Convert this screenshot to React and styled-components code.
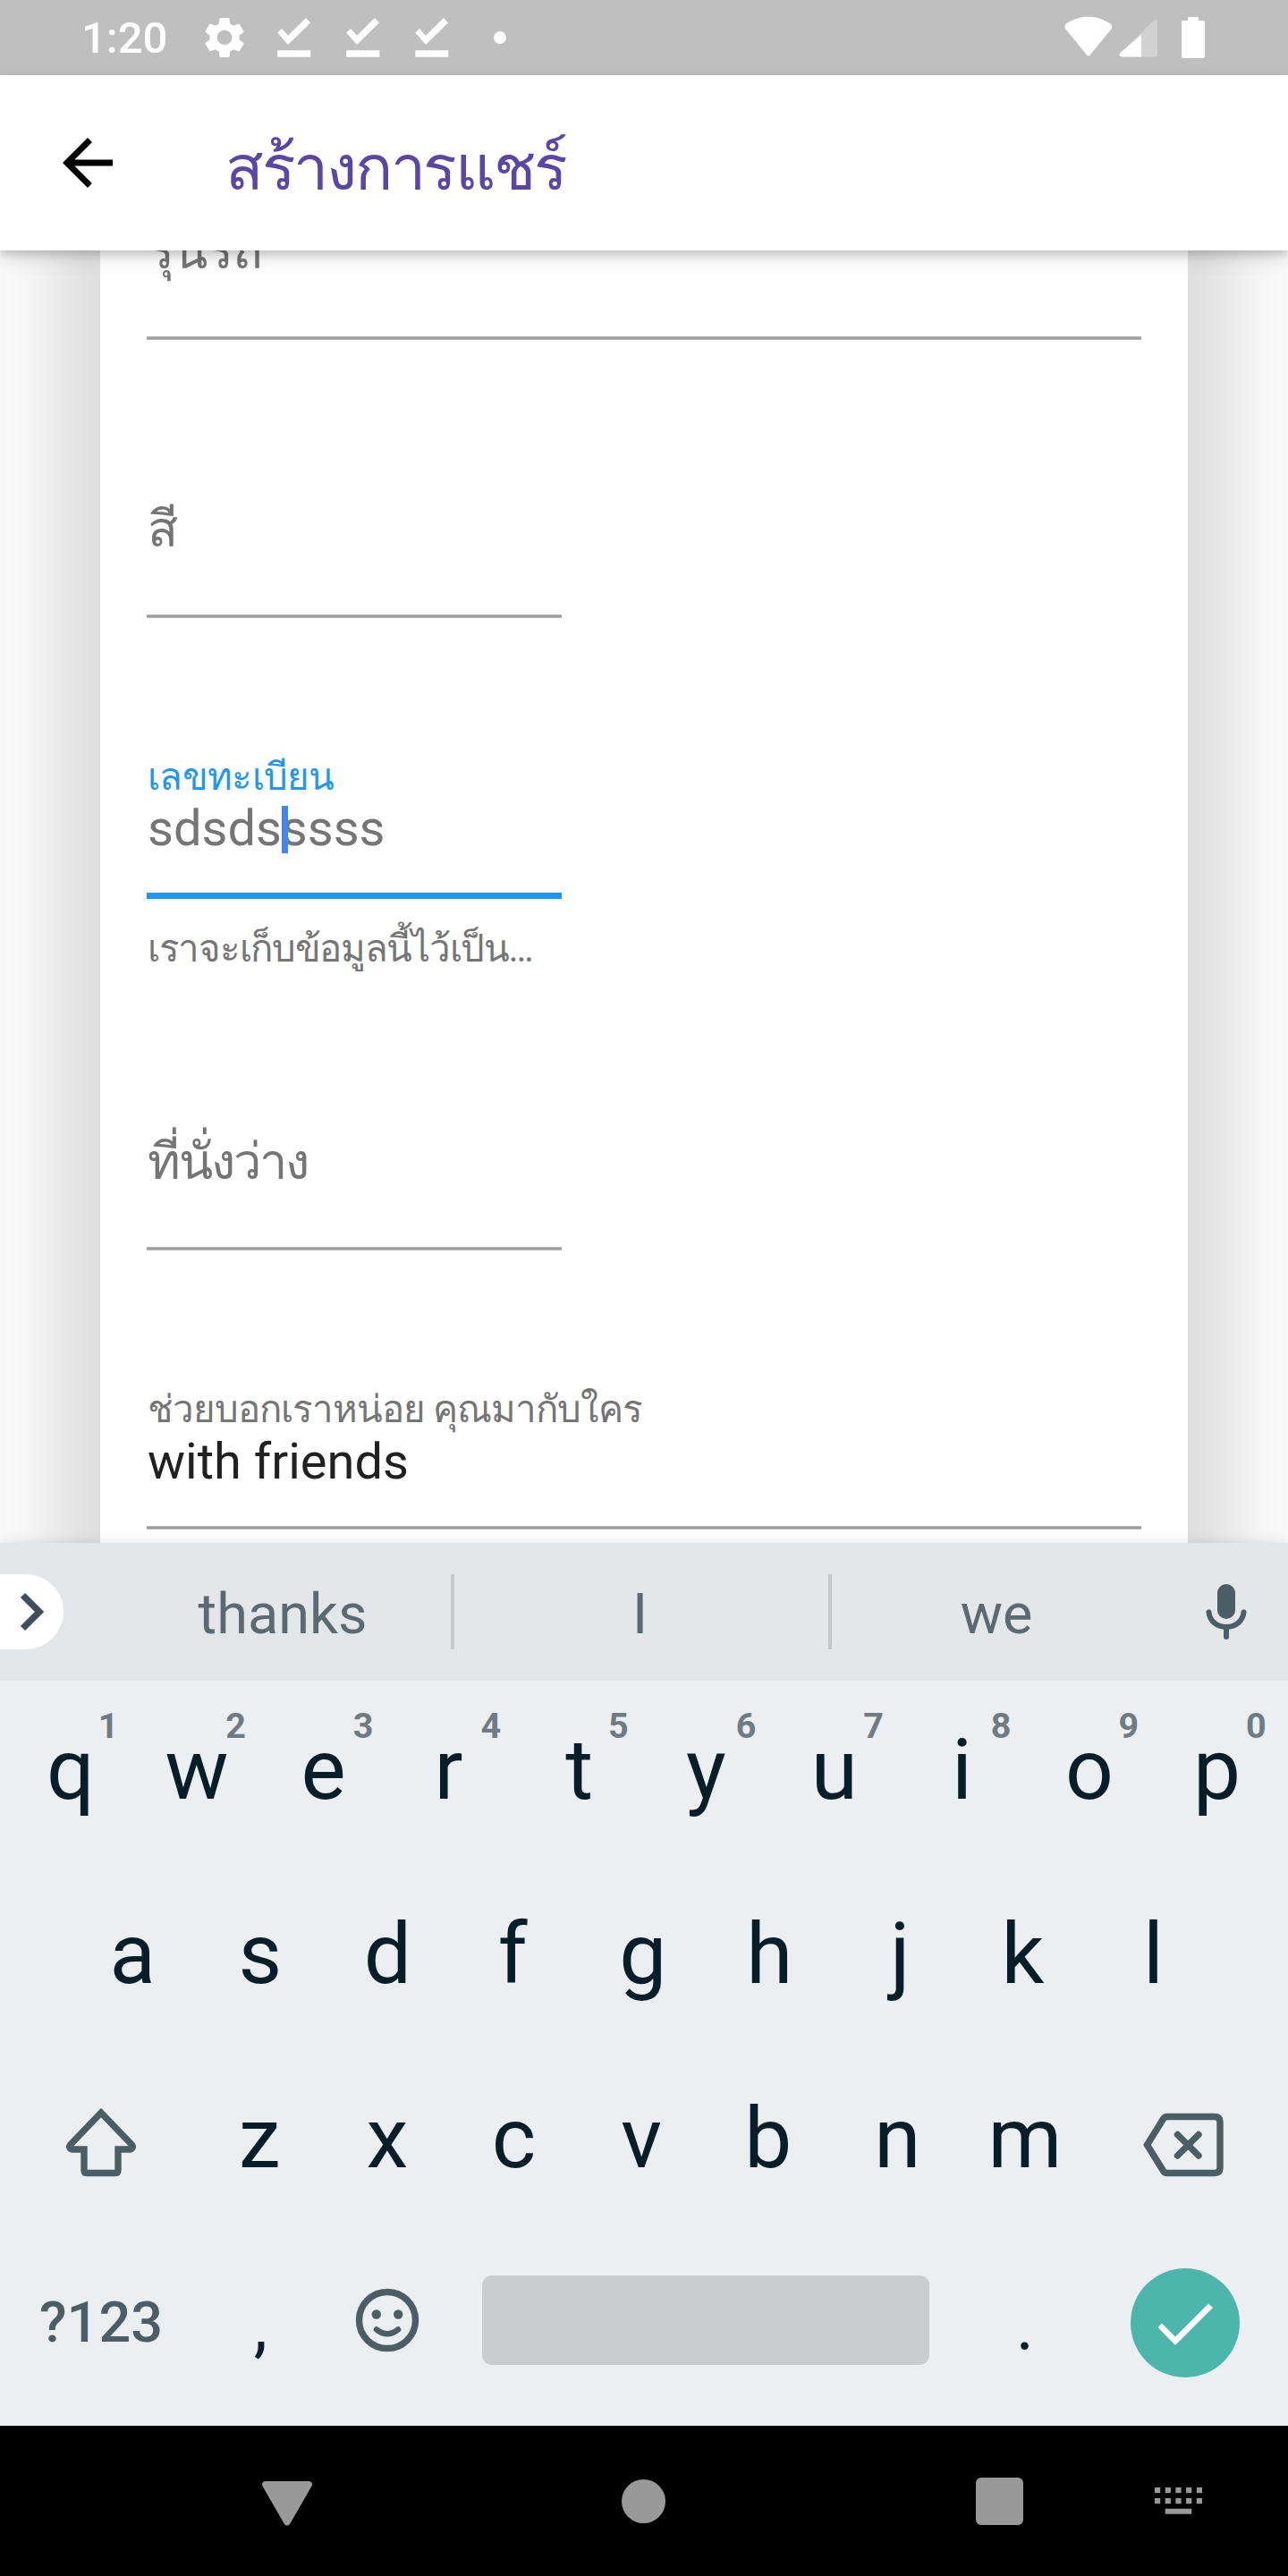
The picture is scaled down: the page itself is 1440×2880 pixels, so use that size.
import React from "react";
import styled, { createGlobalStyle } from "styled-components";

const Global = createGlobalStyle`
  * { box-sizing: border-box; }
  html, body { margin: 0; padding: 0; }
  body { font-family: Roboto, "Noto Sans", sans-serif; background: #fafafa; }
`;

const Screen = styled.div`
  width: 1440px;
  height: 2880px;
  display: flex;
  flex-direction: column;
  overflow: hidden;
`;

const StatusBar = styled.header`
  height: 84px;
  background: #bfbfbf;
  color: #fff;
  display: flex;
  justify-content: space-between;
  padding: 0 84px 0 91px;
`;

const StatusGroup = styled.div`
  display: flex;
  align-items: center;
`;

const Clock = styled.span`
  width: 137px;
  font-size: 49px;
  font-weight: 500;
  line-height: 84px;
  padding-top: 2px;
  white-space: nowrap;
`;

const Icon = styled.svg`
  display: block;
  flex: none;
  width: ${(p) => p.$w}px;
  height: ${(p) => p.$h}px;
  margin-left: ${(p) => p.$ml || 0}px;
  margin-top: ${(p) => p.$mt || 0}px;
  overflow: visible;
`;

const AppBar = styled.div`
  height: 196px;
  flex: none;
  background: #fff;
  display: flex;
  align-items: center;
  padding-left: 56px;
  z-index: 2;
  box-shadow: 0 4px 8px rgba(0, 0, 0, 0.14), 0 8px 20px rgba(0, 0, 0, 0.14);
`;

const Title = styled.h1`
  margin: 0 0 0 112px;
  font-size: 70px;
  font-weight: 400;
  letter-spacing: -2.3px;
  line-height: 84px;
  padding-top: 12px;
  color: #5a46a5;
  white-space: nowrap;
`;

const Body = styled.main`
  height: 1445px;
  flex: none;
  background: #fafafa;
  overflow: hidden;
  padding: 0 112px;
`;

const Card = styled.section`
  height: 1600px;
  background: #fff;
  padding: 0 52px;
  box-shadow: 0 0 64px 50px rgba(0, 0, 0, 0.115);
`;

const Field = styled.div`
  display: flex;
  flex-direction: column;
  justify-content: flex-end;
  height: ${(p) => p.$h}px;
  width: ${(p) => (p.$half ? 464 : 1112)}px;
`;

const Line = styled.div`
  flex: none;
  height: ${(p) => (p.$focus ? 7 : 4)}px;
  margin-top: ${(p) => p.$gap}px;
  background: ${(p) => (p.$focus ? "#2196f3" : "linear-gradient(#b4b4b4 1px, #9e9e9e 1px 3px, #b4b4b4 3px)")};
`;

const Caption = styled.div`
  flex: none;
  font-size: 42px;
  line-height: 50px;
  padding-left: 1px;
  margin-bottom: ${(p) => (p.$focus ? -1 : 0)}px;
  letter-spacing: ${(p) => p.$ls || -0.7}px;
  white-space: nowrap;
  color: ${(p) => (p.$focus ? "#2196f3" : "#757575")};
`;

const Value = styled.div`
  flex: none;
  position: relative;
  padding-left: 1px;
  font-size: 56px;
  line-height: 66px;
  letter-spacing: ${(p) => p.$ls || 0}px;
  white-space: nowrap;
  color: ${(p) => (p.$filled ? "#212121" : "#757575")};
`;

const Caret = styled.i`
  position: absolute;
  left: 151px;
  top: 8px;
  width: 7px;
  height: 53px;
  background: #4285f4;
`;

const Helper = styled(Caption)`
  margin-top: 31px;
  height: 50px;
`;

const Keyboard = styled.section`
  height: 987px;
  flex: none;
  background: #ebeff2;
  z-index: 2;
  box-shadow: 0 0 14px rgba(0, 0, 0, 0.12);
`;

const Suggestions = styled.div`
  height: 154px;
  background: #e3e7ea;
  display: flex;
  align-items: center;
`;

const Expand = styled.div`
  width: 71px;
  height: 84px;
  border-radius: 0 42px 42px 0;
  background: #fff;
  display: flex;
  align-items: center;
  padding-left: 23px;
  margin-right: 57px;
`;

const Word = styled.div`
  width: ${(p) => p.$w}px;
  padding: 5px ${(p) => p.$pr || 0}px 0 0;
  text-align: center;
  font-size: 63px;
  line-height: 84px;
  color: #5b6971;
`;

const Divider = styled.div`
  width: 4px;
  height: 84px;
  background: #c2c8cb;
`;

const KeyRow = styled.div`
  height: ${(p) => p.$h || 206}px;
  display: flex;
  padding: ${(p) => p.$pt || 0}px ${(p) => p.$px}px 0;
`;

const Key = styled.div`
  position: relative;
  width: 142.6px;
  flex: none;
  padding-top: ${(p) => p.$pt || 0}px;
  text-align: center;
  text-indent: ${(p) => (p.$nudge || 0) * 2}px;
  font-size: ${(p) => p.$size || 94.5}px;
  line-height: 120px;
  color: #061e28;
`;

const Hint = styled.sup`
  position: absolute;
  left: 103px;
  top: -12px;
  width: 24px;
  text-indent: 0;
  font-size: 39.5px;
  line-height: 46px;
  font-weight: 700;
  color: #6f7a82;
`;

const IconKey = styled.div`
  width: ${(p) => p.$w}px;
  height: ${(p) => p.$h || 120}px;
  flex: none;
  display: flex;
  align-items: center;
  justify-content: center;
`;

const Symbols = styled.div`
  width: 214px;
  flex: none;
  text-align: center;
  font-size: 63px;
  font-weight: 500;
  line-height: 120px;
  color: #4b5d65;
`;

const Space = styled.div`
  width: 500px;
  height: 100px;
  margin: 7px 35px 0 35px;
  border-radius: 11px;
  background: #c9cdd0;
  flex: none;
`;

const Enter = styled.div`
  width: 122px;
  height: 122px;
  border-radius: 50%;
  background: #4db6ac;
  flex: none;
`;

const NavBar = styled.nav`
  height: 168px;
  flex: none;
  background: #000;
  display: flex;
  align-items: center;
  z-index: 3;
`;

const DoneIcon = ({ ml }) => (
  <Icon $w={38} $h={44} $ml={ml} viewBox="0 0 38 44" fill="#fff">
    <path d="M0.2 16.4 5 12l7 7.8L32 0l5 5.4L12 30Z" />
    <path d="M0.3 36.2h37v7.6h-37z" />
  </Icon>
);

const TOP = "qwertyuiop".split("");
const HOME = "asdfghjkl".split("");
const BOTTOM = "zxcvbnm".split("");

const NUDGE = { q: 1.5, e: -1, r: -3.5, y: -1, f: -3, h: -1, j: 2.5, k: -3, l: 0.5, c: -1, v: -1, b: -2 };

export default function App() {
  return (
    <Screen>
      <Global />
      <StatusBar>
        <StatusGroup>
          <Clock>1:20</Clock>
          <Icon $w={46} $h={46} viewBox="2 2 20 20" fill="#fff">
            <path d="M19.14 12.94c.04-.3.06-.61.06-.94s-.02-.64-.07-.94l2.03-1.58a.49.49 0 0 0 .12-.61l-1.92-3.32a.49.49 0 0 0-.59-.22l-2.39.96c-.5-.38-1.03-.7-1.62-.94l-.36-2.54a.48.48 0 0 0-.48-.41h-3.84c-.24 0-.43.17-.47.41l-.36 2.54c-.59.24-1.13.57-1.62.94l-2.39-.96a.48.48 0 0 0-.59.22L2.74 8.87c-.12.21-.08.47.12.61l2.03 1.58c-.05.3-.09.63-.09.94s.02.64.07.94l-2.03 1.58a.49.49 0 0 0-.12.61l1.92 3.32c.12.22.37.29.59.22l2.39-.96c.5.38 1.03.7 1.62.94l.36 2.54c.05.24.24.41.48.41h3.84c.24 0 .44-.17.47-.41l.36-2.54c.59-.24 1.13-.56 1.62-.94l2.39.96c.22.08.47 0 .59-.22l1.92-3.32a.48.48 0 0 0-.12-.61zM12 15.6A3.61 3.61 0 0 1 8.400 12c0-1.980 1.620-3.600 3.600-3.600s3.600 1.620 3.600 3.600-1.620 3.600-3.600 3.600z" />
          </Icon>
          <DoneIcon ml={36} />
          <DoneIcon ml={39} />
          <DoneIcon ml={39} />
          <Icon $w={14} $h={14} $ml={50} viewBox="0 0 14 14" fill="#fff">
            <circle cx="7" cy="7" r="7" />
          </Icon>
        </StatusGroup>
        <StatusGroup>
          <Icon $w={166} $h={46} viewBox="0 0 166 46" fill="#fff">
            <path d="M1.500 13.500Q-1 10 2 7.500C17-3 36-3 51.500 7.500Q54.500 10 52.500 13.500L29 42Q27 45 24.500 42Z" />
            <path d="M100.500 3.500Q104 1.500 104 5v37q0 2.500-2.500 2.500H64q-4-1-1.500-4.500Z" opacity="0.3" />
            <path d="M86 20v24.500H64q-4-1-1.500-4.500Z" />
            <path d="M138 0h12v4h5q2 0 2 2v38q0 2-2 2h-22q-2 0-2-2V6q0-2 2-2h5z" />
          </Icon>
        </StatusGroup>
      </StatusBar>

      <AppBar>
        <Icon $w={84} $h={84} viewBox="0 0 24 24" fill="#000">
          <path d="M20 11H7.830l5.590-5.590L12 4l-8 8 8 8 1.410-1.410L7.830 13H20v-2z" />
        </Icon>
        <Title>สร้างการแชร์</Title>
      </AppBar>

      <Body>
        <Card>
          <Field $h={100}>
            <Value $ls={-1}>รุ่นรถ</Value>
            <Line $gap={62} />
          </Field>
          <Field $h={311} $half>
            <Value>สี</Value>
            <Line $gap={62} />
          </Field>
          <Field $h={314} $half>
            <Caption $focus>เลขทะเบียน</Caption>
            <Value>
              sdsdsssss
              <Caret />
            </Value>
            <Line $gap={39} $focus />
          </Field>
          <Helper $ls={-1.3}>เราจะเก็บข้อมูลนี้ไว้เป็น…</Helper>
          <Field $h={312} $half>
            <Value $ls={-2}>ที่นั่งว่าง</Value>
            <Line $gap={62} />
          </Field>
          <Field $h={312}>
            <Caption $ls={-1}>ช่วยบอกเราหน่อย คุณมากับใคร</Caption>
            <Value $filled>with friends</Value>
            <Line $gap={39} />
          </Field>
        </Card>
      </Body>

      <Keyboard>
        <Suggestions>
          <Expand>
            <Icon $w={26} $h={42} viewBox="0 0 26 42" fill="none" stroke="#3d4f58" strokeWidth="7.400">
              <path d="M2.500 2.500 21 21 2.500 39.500" />
            </Icon>
          </Expand>
          <Word $w={376}>thanks</Word>
          <Divider />
          <Word $w={418} $pr={3}>I</Word>
          <Divider />
          <Word $w={368}>we</Word>
          <Icon $w={46} $h={62} $ml={50} viewBox="0 0 46 62" fill="none" stroke="#4b5d65">
            <rect x="13" y="0" width="20" height="39" rx="10" fill="#4b5d65" stroke="none" />
            <path d="M3.500 31.500C4.500 41 12 48 23 48s18.500-7 19.500-16.500M23 49v10" strokeWidth="6" strokeLinecap="round" />
          </Icon>
        </Suggestions>

        <KeyRow $pt={40} $px={6} $h={246}>
          {TOP.map((k, i) => (
            <Key key={k} $nudge={NUDGE[k]}>
              {k}
              <Hint>{(i + 1) % 10}</Hint>
            </Key>
          ))}
        </KeyRow>
        <KeyRow $px={77}>
          {HOME.map((k) => (
            <Key key={k} $nudge={NUDGE[k]}>{k}</Key>
          ))}
        </KeyRow>
        <KeyRow $px={6}>
          <IconKey $w={213} $h={128}>
            <Icon $w={78} $h={76} viewBox="0 0 78 76" fill="none" stroke="#4b5d65" strokeWidth="7.400" strokeLinejoin="round">
              <path d="M39 5 73.500 41c2 2.500 0 5-2.500 5H58V69.500q0 3-3 3H23q-3 0-3-3V46H7c-2.500 0-4.500-2.500-2.500-5Z" strokeLinejoin="miter" />
            </Icon>
          </IconKey>
          {BOTTOM.map((k) => (
            <Key key={k} $nudge={NUDGE[k]}>{k}</Key>
          ))}
          <IconKey $w={212} $h={133}>
            <Icon $w={90} $h={70} viewBox="0 0 90 70" fill="none" stroke="#4b5d65" strokeWidth="7.400">
              <path d="M4.500 35 22.500 6Q24 3.500 27 3.500H80q6 0 6 6v51q0 6-6 6H27q-3 0-4.500-2.500Z" />
              <path d="m38.500 23.500 23.500 23.500m0-23.500L38.500 47" strokeLinecap="round" />
            </Icon>
          </IconKey>
        </KeyRow>
        <KeyRow $px={6} $h={175}>
          <Symbols>?123</Symbols>
          <Key $size={77} $pt={3}>,</Key>
          <IconKey $w={141} $h={114}>
            <Icon $w={70} $h={70} viewBox="0 0 70 70" fill="none" stroke="#4b5d65" strokeWidth="7.400">
              <circle cx="35" cy="35" r="31.500" />
              <circle cx="22.800" cy="28.500" r="5.200" fill="#4b5d65" stroke="none" />
              <circle cx="47.200" cy="28.500" r="5.200" fill="#4b5d65" stroke="none" />
              <path d="M23 45.500q12 9.500 24 0" strokeWidth="6.500" strokeLinecap="round" />
            </Icon>
          </IconKey>
          <Space />
          <Key $size={77} $pt={4} $nudge={1}>.</Key>
          <IconKey $w={218} $h={119}>
            <Enter>
              <Icon $w={122} $h={122} viewBox="0 0 122 122" fill="#fff">
                <path d="M30.500 66 35 61.500 50 76.500 87 39.500l5 4.500L50 86Z" />
              </Icon>
            </Enter>
          </IconKey>
        </KeyRow>
      </Keyboard>

      <NavBar>
        <Icon $w={56} $h={50} $ml={293} $mt={6} viewBox="0 0 56 50" fill="#999">
          <path d="M3 0h50q4 1 2.500 5.500L31 48q-3 3.500-6 0L.5 5.500Q-1 1 3 0Z" />
        </Icon>
        <Icon $w={49} $h={49} $ml={346} viewBox="0 0 49 49" fill="#999">
          <circle cx="24.500" cy="24.500" r="24.500" />
        </Icon>
        <Icon $w={53} $h={53} $ml={347} viewBox="0 0 53 53" fill="#999">
          <rect width="53" height="53" rx="6" />
        </Icon>
        <Icon $w={53} $h={30} $ml={147} viewBox="0 0 53 30" fill="#999">
          {[0, 1, 2, 3, 4].map((i) => (
            <g key={i}>
              <rect x={i * 11.7} y="0" width="6.200" height="6.200" />
              <rect x={i * 11.7} y="12" width="6.200" height="6.200" />
            </g>
          ))}
          <rect x="11.700" y="23.700" width="29.600" height="6" />
        </Icon>
      </NavBar>
    </Screen>
  );
}
